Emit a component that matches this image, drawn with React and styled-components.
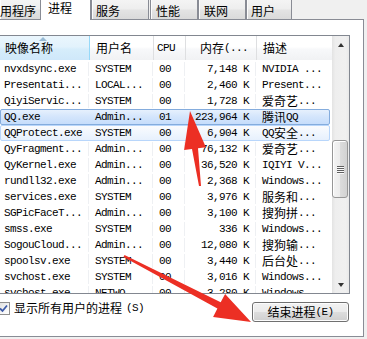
import React from "react";
import styled, { createGlobalStyle, css } from "styled-components";

const Global = createGlobalStyle`
  html, body { margin: 0; padding: 0; }
  body {
    width: 367px; height: 339px; overflow: hidden; background: #f0f0f0;
    font-family: "Liberation Mono", "Noto Sans CJK SC", monospace; color: #000;
  }
`;

const CJK_RE = /([\u3000-\u9fff\uff00-\uffef]+)/;

const Lat = styled.span`
  display: block;
  flex: none;
  font-family: "Liberation Mono", monospace;
  font-size: 11px;
  line-height: 14px;
  letter-spacing: -0.6px;
  white-space: pre;
`;
const Han = styled.span`
  display: block;
  flex: none;
  font-family: "Noto Sans CJK SC", sans-serif;
  font-size: 12px;
  line-height: 14px;
  letter-spacing: 0;
  white-space: pre;
`;

function T({ children }) {
  const parts = String(children).split(CJK_RE).filter(Boolean);
  return parts.map((p, i) =>
    CJK_RE.test(p) ? <Han key={i}>{p}</Han> : <Lat key={i}>{p}</Lat>
  );
}

const Page = styled.div`
  position: relative;
  width: 367px;
  height: 339px;
  background: #f0f0f0;
  display: flex;
  flex-direction: column;
  overflow: hidden;
`;

const TabStrip = styled.div`
  height: 19px;
  display: flex;
  align-items: flex-start;
`;

const Tab = styled.div`
  box-sizing: border-box;
  display: flex;
  align-items: flex-start;
  width: ${(p) => p.$w}px;
  margin-left: ${(p) => p.$ml || 0}px;
  height: 19px;
  padding-left: ${(p) => p.$pl}px;
  padding-top: 4px;
  white-space: nowrap;
  border-right: 1px solid #898c95;
  border-left: ${(p) => (p.$noLeft ? "none" : "1px solid #898c95")};
  background: linear-gradient(#f4f4f4 0%, #eeeeee 45%, #e3e3e3 55%, #dadada 100%);
  box-shadow: inset 1px 0 0 #fcfcfc;
  ${(p) =>
    p.$active &&
    css`
      position: relative;
      z-index: 2;
      height: 20px;
      padding-top: 1px;
      background: #fff;
      box-shadow: none;
      border-left: none;
    `}
`;

const Panel = styled.div`
  box-sizing: border-box;
  width: 364px;
  height: 318px;
  background: #fff;
  border: 1px solid #898c95;
  border-left: none;
  padding: 15px 13px 0 0;
  display: flex;
  flex-direction: column;
`;

const ListBox = styled.div`
  box-sizing: border-box;
  width: 350px;
  height: 259px;
  border: 1px solid #828790;
  border-left: none;
  display: flex;
  background: #fff;
`;

const ListMain = styled.div`
  width: 332px;
  display: flex;
  flex-direction: column;
  overflow: hidden;
`;

const COLS = [88, 64, 32, 71];

const HeaderRow = styled.div`
  display: flex;
  height: 25px;
  flex: none;
`;

const HeadCell = styled.div`
  position: relative;
  box-sizing: border-box;
  width: ${(p) => p.$w}px;
  flex: ${(p) => (p.$last ? "1" : "none")};
  height: 24px;
  display: flex;
  align-items: center;
  justify-content: ${(p) => (p.$right ? "flex-end" : "flex-start")};
  padding-left: ${(p) => p.$pl || 0}px;
  padding-right: ${(p) => p.$pr || 0}px;
  white-space: nowrap;
  border-right: 1px solid ${(p) => (p.$last ? "transparent" : "#dedfe1")};
  background: linear-gradient(#ffffff 0%, #ffffff 45%, #f7f8fa 55%, #f1f2f4 100%);
  ${(p) =>
    p.$sorted &&
    css`
      background: linear-gradient(#eaf6fd 0%, #e2f2fc 45%, #d6edfb 55%, #cfe8fa 100%);
      border-right: 1px solid #96d9f9;
    `}
`;

const SortArrow = styled.div`
  position: absolute;
  left: 39px;
  top: 1px;
  width: 0;
  height: 0;
  border-left: 4px solid transparent;
  border-right: 4px solid transparent;
  border-bottom: 4px solid #97b9d3;
`;

const Body = styled.div`
  flex: 1;
  overflow: hidden;
`;

const Row = styled.div`
  box-sizing: border-box;
  display: flex;
  height: 16px;
  width: 330px;
  border: 1px solid transparent;
  border-radius: 2px;
  ${(p) =>
    p.$state === "sel" &&
    css`
      border-color: #84acdd;
      background: linear-gradient(#e6f0fd 0%, #d3e5fc 50%, #c6ddfb 100%);
    `}
  ${(p) =>
    p.$state === "hov" &&
    css`
      border-color: #b8d6fb;
      background: linear-gradient(#fafbfd 0%, #f0f6fe 50%, #e6f0fd 100%);
    `}
`;

const Cell = styled.div`
  box-sizing: border-box;
  width: ${(p) => p.$w}px;
  flex: ${(p) => (p.$last ? "1" : "none")};
  height: 14px;
  display: flex;
  align-items: center;
  justify-content: ${(p) => (p.$right ? "flex-end" : "flex-start")};
  padding-left: ${(p) => p.$pl || 0}px;
  padding-right: ${(p) => p.$pr || 0}px;
  border-right: 1px solid ${(p) => (p.$plain && !p.$last ? "#eef0f3" : "transparent")};
`;

const ScrollBar = styled.div`
  width: 17px;
  flex: none;
  display: flex;
  flex-direction: column;
  background: linear-gradient(90deg, #e3e3e3 0%, #eeeeee 20%, #f0f0f0 80%, #e9e9e9 100%);
`;

const ScrollBtn = styled.div`
  height: 17px;
  flex: none;
  display: flex;
  align-items: center;
  justify-content: center;
`;

const Tri = styled.div`
  width: 0;
  height: 0;
  border-left: 3.5px solid transparent;
  border-right: 3.5px solid transparent;
  ${(p) =>
    p.$down
      ? css`border-top: 4px solid #333;`
      : css`border-bottom: 4px solid #333;`}
`;

const Track = styled.div`
  flex: 1;
  padding-top: 87px;
`;

const Thumb = styled.div`
  box-sizing: border-box;
  width: 16px;
  height: 58px;
  border: 1px solid #979797;
  border-radius: 3px;
  background: linear-gradient(90deg, #f4f4f4 0%, #ececec 50%, #dcdcdc 51%, #d2d2d2 100%);
  box-shadow: inset 1px 1px 0 #fff;
  display: flex;
  flex-direction: column;
  align-items: center;
  justify-content: center;
  gap: 1px;
`;

const Grip = styled.div`
  width: 7px;
  height: 1px;
  background: #5f5f5f;
  box-shadow: 0 1px 0 #fafafa;
`;

const Footer = styled.div`
  margin-top: 8px;
  height: 20px;
  display: flex;
  justify-content: space-between;
  align-items: flex-start;
`;

const CheckRow = styled.div`
  display: flex;
  align-items: center;
  gap: 4px;
  margin-top: -1px;
  height: 14px;
`;

const Box = styled.div`
  box-sizing: border-box;
  width: 13px;
  height: 13px;
  margin-left: -3px;
  border: 1px solid #8f8f8f;
  background: linear-gradient(135deg, #dcdcdc 0%, #f5f5f5 60%, #ffffff 100%);
  display: flex;
  align-items: center;
  justify-content: center;
`;

const Button = styled.div`
  box-sizing: border-box;
  width: 97px;
  height: 20px;
  margin-right: 1px;
  border: 1px solid #707070;
  border-radius: 3px;
  background: linear-gradient(#f2f2f2 0%, #ebebeb 48%, #dddddd 52%, #cfcfcf 100%);
  box-shadow: inset 0 0 0 1px #fcfcfc;
  display: flex;
  align-items: center;
  justify-content: center;
  white-space: nowrap;
`;

const Overlay = styled.svg`
  position: absolute;
  left: 0;
  top: 0;
  pointer-events: none;
`;

const TABS = [
  { label: "用程序", w: 41, pl: 0, noLeft: true },
  { label: "进程", w: 50, pl: 7, active: true },
  { label: "服务", w: 58, pl: 4 },
  { label: "性能", w: 48, pl: 5, ml: 1 },
  { label: "联网", w: 48, pl: 5 },
  { label: "用户", w: 46, pl: 4 },
];

const ROWS = [
  ["nvxdsync.exe", "SYSTEM", "00", "7,148 K", "NVIDIA ..."],
  ["Presentati...", "LOCAL...", "00", "2,460 K", "Present..."],
  ["QiyiServic...", "SYSTEM", "00", "1,728 K", "爱奇艺..."],
  ["QQ.exe", "Admin...", "01", "223,964 K", "腾讯QQ", "sel"],
  ["QQProtect.exe", "SYSTEM", "00", "6,904 K", "QQ安全...", "hov"],
  ["QyFragment...", "Admin...", "00", "76,132 K", "爱奇艺..."],
  ["QyKernel.exe", "Admin...", "00", "36,520 K", "IQIYI V..."],
  ["rundll32.exe", "Admin...", "00", "2,368 K", "Windows..."],
  ["services.exe", "SYSTEM", "00", "3,976 K", "服务和..."],
  ["SGPicFaceT...", "Admin...", "00", "3,100 K", "搜狗拼..."],
  ["smss.exe", "SYSTEM", "00", "336 K", "Windows..."],
  ["SogouCloud...", "Admin...", "00", "12,080 K", "搜狗输..."],
  ["spoolsv.exe", "SYSTEM", "00", "3,440 K", "后台处..."],
  ["svchost.exe", "SYSTEM", "00", "3,016 K", "Windows..."],
  ["svchost.exe", "NETWO...", "00", "3,280 K", "Windows..."],
];

function arrowPoints(tip, tail, headLen, headHalf, wTop, wBot) {
  const dx = tip[0] - tail[0];
  const dy = tip[1] - tail[1];
  const len = Math.hypot(dx, dy);
  const ux = dx / len, uy = dy / len;
  const px = -uy, py = ux;
  const base = [tip[0] - ux * headLen, tip[1] - uy * headLen];
  const pts = [
    [tail[0] + px * wBot / 2, tail[1] + py * wBot / 2],
    [base[0] + px * wTop / 2, base[1] + py * wTop / 2],
    [base[0] + px * headHalf, base[1] + py * headHalf],
    tip,
    [base[0] - px * headHalf, base[1] - py * headHalf],
    [base[0] - px * wTop / 2, base[1] - py * wTop / 2],
    [tail[0] - px * wBot / 2, tail[1] - py * wBot / 2],
  ];
  return pts.map((p) => p.map((v) => v.toFixed(1)).join(",")).join(" ");
}

export default function App() {
  return (
    <>
      <Global />
      <Page>
        <TabStrip>
          {TABS.map((t) => (
            <Tab key={t.label} $w={t.w} $pl={t.pl} $ml={t.ml} $active={t.active} $noLeft={t.noLeft}>
              <T>{t.label}</T>
            </Tab>
          ))}
        </TabStrip>
        <Panel>
          <ListBox>
            <ListMain>
              <HeaderRow>
                <HeadCell $w={90} $pl={5} $sorted>
                  <SortArrow />
                  <T>映像名称</T>
                </HeadCell>
                <HeadCell $w={64} $pl={6}>
                  <T>用户名</T>
                </HeadCell>
                <HeadCell $w={32} $pl={3}>
                  <T>CPU</T>
                </HeadCell>
                <HeadCell $w={71} $right $pr={8}>
                  <T>内存(...</T>
                </HeadCell>
                <HeadCell $w={75} $last $pl={6}>
                  <T>描述</T>
                </HeadCell>
              </HeaderRow>
              <Body>
                {ROWS.map((r, i) => {
                  const plain = !r[5];
                  return (
                    <Row key={i} $state={r[5]}>
                      <Cell $w={COLS[0]} $pl={3} $plain={plain}><T>{r[0]}</T></Cell>
                      <Cell $w={COLS[1]} $pl={6} $plain={plain}><T>{r[1]}</T></Cell>
                      <Cell $w={COLS[2]} $pl={6} $plain={plain}><T>{r[2]}</T></Cell>
                      <Cell $w={COLS[3]} $right $pr={6} $plain={plain}><T>{r[3]}</T></Cell>
                      <Cell $w={73} $last $pl={6}><T>{r[4]}</T></Cell>
                    </Row>
                  );
                })}
              </Body>
            </ListMain>
            <ScrollBar>
              <ScrollBtn><Tri /></ScrollBtn>
              <Track>
                <Thumb>
                  <Grip /><Grip /><Grip /><Grip />
                </Thumb>
              </Track>
              <ScrollBtn><Tri $down /></ScrollBtn>
            </ScrollBar>
          </ListBox>
          <Footer>
            <CheckRow>
              <Box>
                <svg width="9" height="9" viewBox="0 0 9 9">
                  <path d="M1 4.5 L3.5 7 L8 1.5" fill="none" stroke="#3d5aa8" strokeWidth="1.8" />
                </svg>
              </Box>
              <T>显示所有用户的进程(S)</T>
            </CheckRow>
            <Button>
              <T>结束进程(E)</T>
            </Button>
          </Footer>
        </Panel>
        <Overlay width="367" height="339" viewBox="0 0 367 339">
          <polygon points={arrowPoints([190, 111], [200, 186], 38, 11, 6, 2)} fill="#ec2f24" />
          <polygon points={arrowPoints([251, 322], [124, 256], 36, 13, 7, 2)} fill="#ec2f24" />
        </Overlay>
      </Page>
    </>
  );
}
